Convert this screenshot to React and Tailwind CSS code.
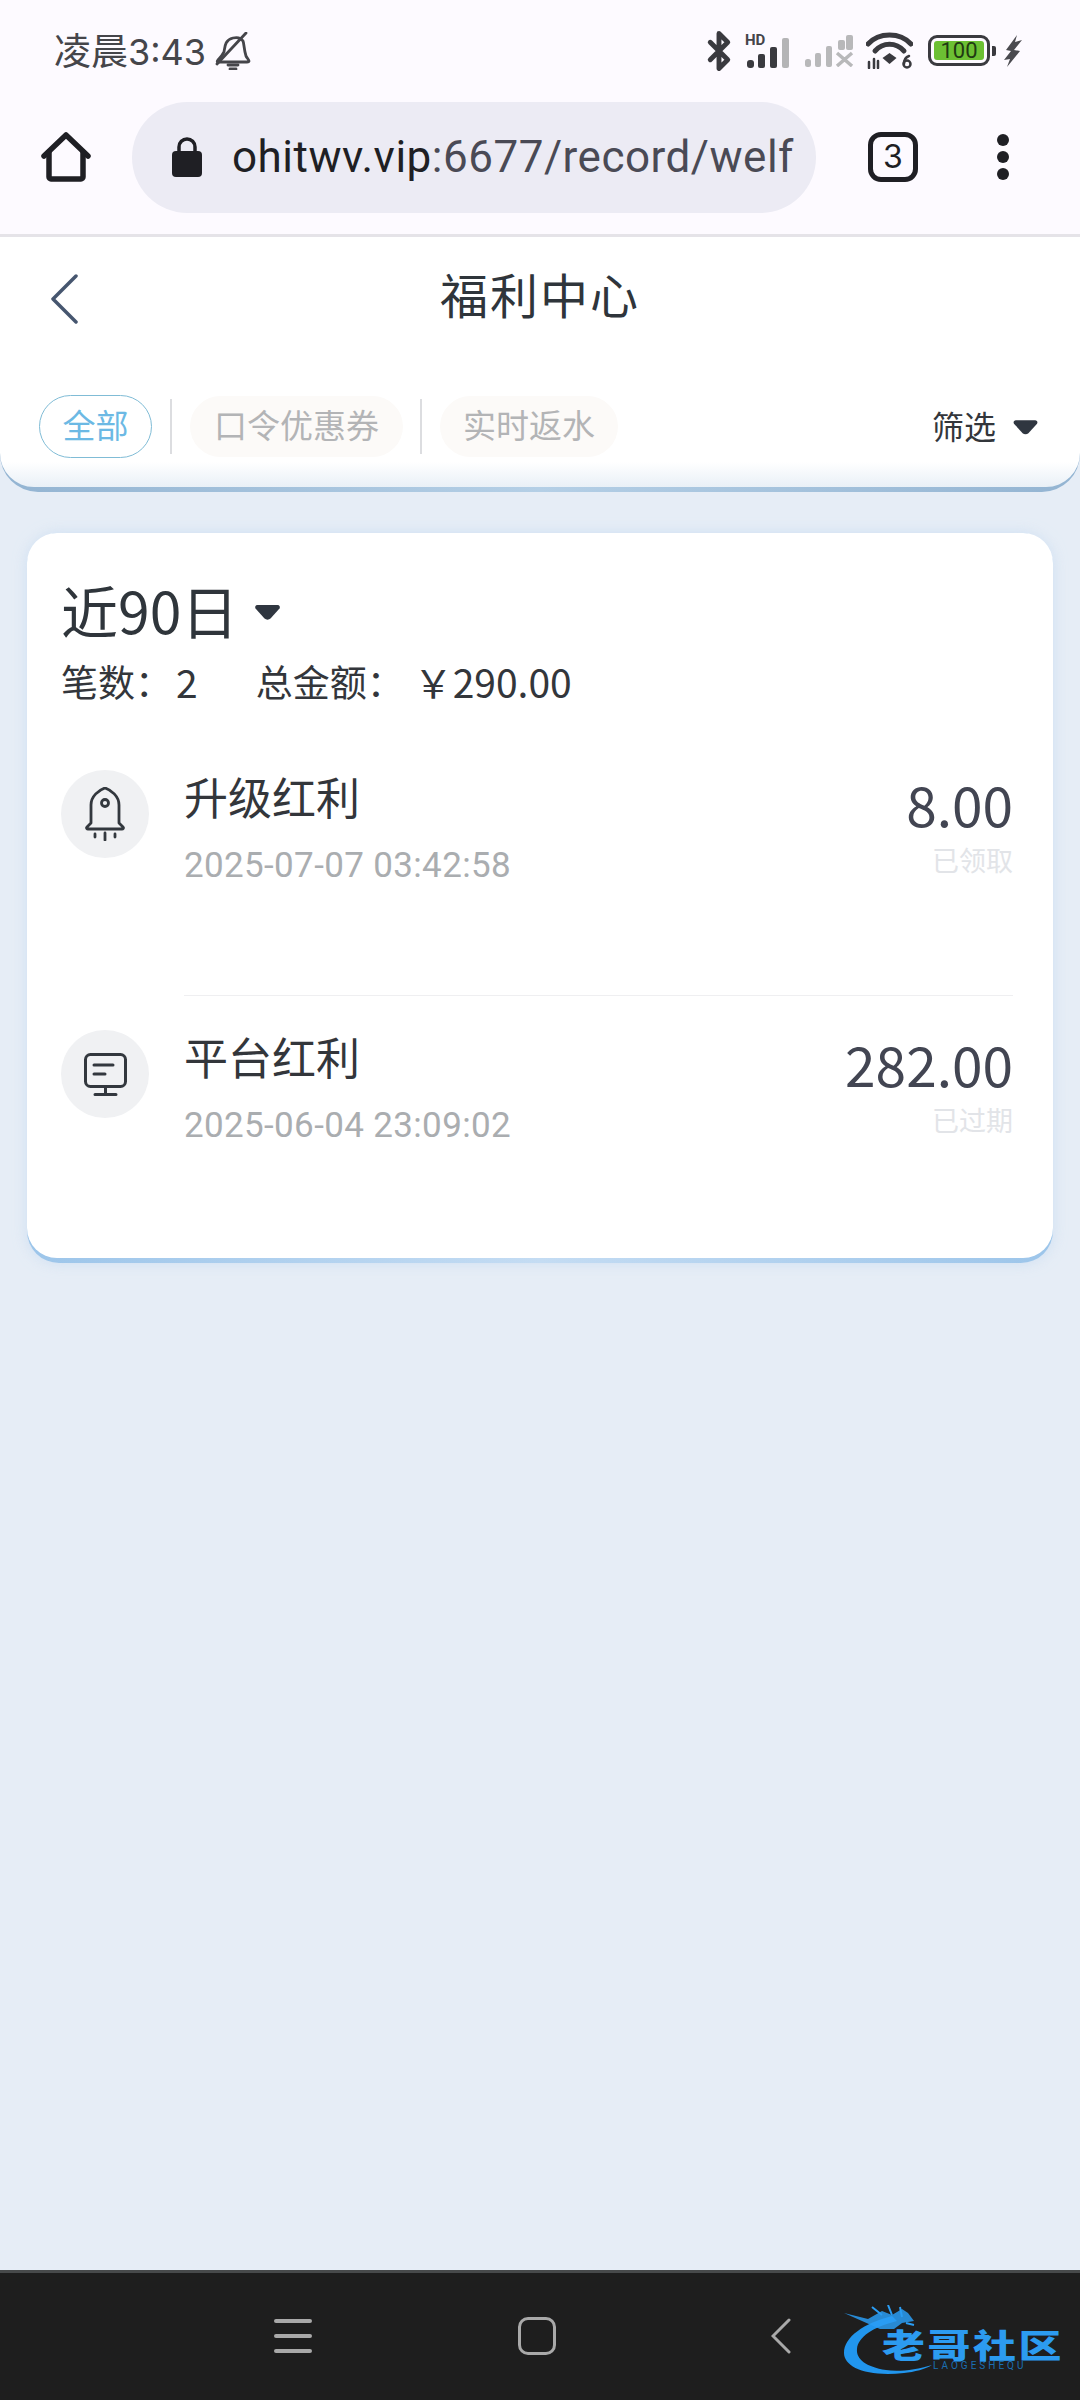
import React from 'react';
import { Bluetooth } from 'lucide-react';

const CJK = "font-['Noto_Sans_CJK_SC','Noto_Sans',sans-serif]";

const Caret = ({ className }) => (
  <svg viewBox="0 0 26 16" className={className} fill="#2f3640">
    <path d="M3 1h20c2 0 3 2 2 3.500l-9 10c-1.500 1.500-4.500 1.500-6 0l-9-10C0 3 1 1 3 1z" />
  </svg>
);

const MutedBell = () => (
  <svg width="36" height="38" viewBox="0 0 36 38" fill="none" stroke="#45454a" strokeWidth="2.800" strokeLinecap="round" strokeLinejoin="round" className="ml-[9px]">
    <path d="M9 20c1-6 1-12 9-14 4-1 8 0 10 3 1 2 1 9 3 15 1 2 3 4 3 5 0 1-1 1-2 1H3c-1 0-1-1 0-2 2-2 4-4 6-8z" />
    <path d="M2 32L31 1" />
    <path d="M13 33h10M15 37h6" />
  </svg>
);

const StatusBar = () => (
  <div className="flex h-[101px] items-center pl-[54px] pr-[58px] text-[#45454a]">
    <span className={`text-[37px] leading-none ${CJK}`}>凌晨<span className="font-['Inter'] text-[36px]">3:43</span></span>
    <MutedBell />
    <div className="ml-auto flex items-center">
      <Bluetooth size={42} strokeWidth={2.8} className="text-[#3a3a3f]" />
      <div className="relative ml-[5px] w-[49px]">
        <span className="absolute -top-[1px] left-0 text-[15px] leading-none font-bold font-['Roboto']">HD</span>
        <div className="pt-[4px]">
          <svg width="49" height="30" viewBox="0 0 49 30">
            <rect x="2" y="22" width="7" height="8" rx="3" fill="#3a3a3f" />
            <rect x="13" y="16" width="7" height="14" rx="2" fill="#3a3a3f" />
            <rect x="25" y="9" width="7" height="21" rx="2" fill="#3a3a3f" />
            <rect x="37" y="0" width="7" height="30" rx="2" fill="#b4b4b6" />
          </svg>
        </div>
      </div>
      <svg width="49" height="32" viewBox="0 0 49 32" className="ml-[11px]">
        <rect x="0" y="24" width="6" height="8" rx="2.500" fill="#b8b8ba" />
        <rect x="10" y="18" width="6" height="14" rx="2" fill="#b8b8ba" />
        <rect x="21" y="11" width="6" height="21" rx="2" fill="#b8b8ba" />
        <rect x="33" y="5" width="7" height="10" rx="2" fill="#b8b8ba" />
        <rect x="41" y="0" width="7" height="15" rx="2" fill="#b8b8ba" />
        <path d="M32 18l15 13M47 18L32 31" stroke="#b8b8ba" strokeWidth="3.500" />
      </svg>
      <svg width="47" height="37" viewBox="0 0 47 37" className="ml-[12px]" fill="none" stroke="#3a3a3f" strokeLinecap="round">
        <path d="M2 12C13 0 34 0 45 12" strokeWidth="5" />
        <path d="M9 19C17 10 30 10 38 19" strokeWidth="5" />
        <path d="M23.500 21l7 5-7 6-7-6z" fill="#3a3a3f" stroke="none" />
        <path d="M3 30v6M8 27v9M12 29v7" strokeWidth="2.500" />
        <circle cx="41" cy="32" r="3.500" strokeWidth="2.500" />
        <path d="M43 24c-3 1-5 4-5 8" strokeWidth="2.500" />
      </svg>
      <div className="ml-[15px] flex h-[31px] w-[62px] items-center justify-center rounded-[9px] border-[3px] border-[#3a3a3f] p-[3px]">
        <div className="flex h-full w-full items-center justify-center rounded-[3px] bg-[#6cc033] text-[22px] leading-none text-[#1f3a12] font-['Roboto']">100</div>
      </div>
      <div className="ml-[2px] h-[10px] w-[4px] rounded-r-[2px] bg-[#3a3a3f]" />
      <svg width="18" height="32" viewBox="0 0 18 32" fill="#4a4a4f" className="ml-[8px]">
        <path d="M13 0L2 15l5 1-7 9 6-1-3 8 13-16-6-1 8-10-7 2z" />
      </svg>
    </div>
  </div>
);

const Toolbar = () => (
  <div className="flex h-[112px] items-center pl-[41px]">
    <svg width="50" height="50" viewBox="0 0 50 50" fill="none" stroke="#1f1f24" strokeWidth="5.500" strokeLinejoin="round" strokeLinecap="round">
      <path d="M3 24L25 3l22 21" />
      <path d="M8 20v25c0 1 1 2 2 2h30c1 0 2-1 2-2V20" />
    </svg>
    <div className="ml-[41px] flex h-[111px] w-[684px] items-center overflow-hidden rounded-full bg-[#ecebf4] pl-[40px]">
      <svg width="30" height="40" viewBox="0 0 30 40" fill="#1f1f24">
        <path d="M7 16v-6a8 8 0 0116 0v6" fill="none" stroke="#1f1f24" strokeWidth="3.500" />
        <rect x="0" y="14" width="30" height="26" rx="4" />
      </svg>
      <span className="ml-[30px] whitespace-nowrap text-[44px] leading-none tracking-[0.5px] text-[#4a4a55] font-['Roboto']">
        <span className="text-[#1f1f24]">ohitwv.vip</span>:6677/record/welf
      </span>
    </div>
    <div className="ml-[52px] flex h-[50px] w-[50px] items-center justify-center rounded-[13px] border-[5px] border-[#1f1f24] text-[32px] leading-none text-[#1f1f24] font-['Inter']">3</div>
    <div className="ml-[79px] flex flex-col gap-[5px]">
      <div className="h-[12px] w-[12px] rounded-full bg-[#1f1f24]" />
      <div className="h-[12px] w-[12px] rounded-full bg-[#1f1f24]" />
      <div className="h-[12px] w-[12px] rounded-full bg-[#1f1f24]" />
    </div>
  </div>
);

const RocketIcon = () => (
  <svg width="40" height="54" viewBox="0 0 40 54" fill="none" stroke="#33383e" strokeWidth="2.800" strokeLinecap="round" strokeLinejoin="round">
    <path d="M6 36V18C6 9 14 3 20 1c6 2 14 8 14 17v18l4 4c1 1 0 2-1 2H3c-1 0-2-1-1-2z" />
    <circle cx="20" cy="16" r="3.500" />
    <path d="M20 46v7M10 47v3M30 47v3" />
  </svg>
);

const MonitorIcon = () => (
  <svg width="43" height="43" viewBox="0 0 43 43" fill="none" stroke="#33383e" strokeWidth="3" strokeLinecap="round" strokeLinejoin="round">
    <rect x="1.500" y="1.500" width="40" height="32" rx="5" />
    <path d="M10 12h19M10 21h11M21.500 34v7M11 41.500h21" />
  </svg>
);

const Record = ({ icon, title, date, amount, status, divider }) => (
  <div className="flex">
    <div className="flex h-[88px] w-[88px] shrink-0 items-center justify-center rounded-full bg-[#f0f1f3]">{icon}</div>
    <div className={`ml-[35px] flex flex-1 justify-between ${divider ? 'h-[226px] border-b border-[#efeff1]' : ''}`}>
      <div className="-mt-[3px]">
        <div className={`h-[58px] text-[44px] leading-[58px] text-[#33363b] ${CJK}`}>{title}</div>
        <div className="mt-[19px] h-[44px] text-[35px] leading-[44px] tracking-[0.35px] text-[#aaadb0] font-['Roboto']">{date}</div>
      </div>
      <div className="flex flex-col items-end">
        <div className={`mt-[3px] h-[60px] text-[55px] leading-[60px] text-[#424552] ${CJK}`}>{amount}</div>
        <div className={`mt-[10px] h-[34px] text-[27px] leading-[34px] text-[#e2e4e8] ${CJK}`}>{status}</div>
      </div>
    </div>
  </div>
);

const Logo = () => (
  <div className="absolute left-[842px] top-[32px] h-[72px] w-[226px]">
    <svg width="100" height="72" viewBox="0 0 100 72" className="absolute left-0 top-0">
      <path d="M50 11C22 18 2 32 2 48c0 14 22 24 60 20 10-1 22-4 28-8-16 5-34 7-46 5C24 62 14 54 15 44c1-12 16-22 40-28z" fill="#2196ee" />
      <path d="M2 8l24 6 14-8 10 4 10-6 6 4 6 8-12 2-8 6-14 0z" fill="#2a9df4" opacity="0.85" />
      <path d="M30 2l10 8M46 0l4 10M58 2l2 10M64 18l8 2" stroke="#2a9df4" strokeWidth="2" />
    </svg>
    <div className={`absolute left-[40px] top-[24px] origin-left scale-x-[1.3] whitespace-nowrap text-[33px] leading-[30px] font-black tracking-[2px] text-[#2c9bf0] ${CJK}`}>老哥社区</div>
    <div className="absolute left-[91px] top-[56px] whitespace-nowrap text-[10px] leading-[10px] tracking-[3px] text-[#1b6fb3] font-['Roboto']">LAOGESHEQU</div>
  </div>
);

export default function App() {
  return (
    <div className={`flex h-[2400px] w-[1080px] flex-col overflow-hidden bg-[#e6edf6] ${CJK}`}>
      {/* browser chrome */}
      <div className="h-[237px] border-b-[3px] border-[#e5e3e8] bg-[#fdfaff]">
        <StatusBar />
        <Toolbar />
      </div>

      {/* page header */}
      <div className="rounded-b-[38px] bg-gradient-to-r from-[#93b4d2] via-[#b4cfe6] to-[#93b4d2] pb-[5px]">
        <div className="rounded-b-[34px] bg-gradient-to-b from-white from-[90%] to-[#e9f0f7] pb-[29px]">
          <div className="grid h-[112px] grid-cols-[1fr_auto_1fr] items-center px-[50px]">
            <svg width="28" height="50" viewBox="0 0 28 50" fill="none" stroke="#46566f" strokeWidth="3.500" strokeLinecap="round" strokeLinejoin="round" className="mt-[12px]">
              <path d="M26 2L3 25l23 23" />
            </svg>
            <div className="text-[48px] leading-none tracking-[2px] text-[#2f353b]">福利中心</div>
            <div />
          </div>
          <div className="mt-[46px] flex h-[63px] items-center pl-[39px] pr-[42px]">
            <div className="flex h-[63px] w-[113px] items-center justify-center rounded-full border border-[#80bcd6] pb-[3px] text-[33px] text-[#6cb9e4]">全部</div>
            <div className="ml-[18px] h-[55px] w-[2px] bg-[#dcdde0]" />
            <div className="ml-[18px] flex h-[61px] w-[213px] items-center justify-center rounded-full bg-[#fcfaf8] pb-[3px] text-[33px] text-[#b3b4b6]">口令优惠券</div>
            <div className="ml-[17px] h-[55px] w-[2px] bg-[#dcdde0]" />
            <div className="ml-[18px] flex h-[61px] w-[178px] items-center justify-center rounded-full bg-[#fcfaf8] pb-[3px] text-[33px] text-[#b3b4b6]">实时返水</div>
            <div className="ml-auto pb-[3px] text-[32px] leading-none text-[#33363b]">筛选</div>
            <Caret className="ml-[17px] h-[16px] w-[25px]" />
          </div>
        </div>
      </div>

      {/* records card */}
      <div className="mx-[27px] mt-[41px] rounded-[32px] bg-gradient-to-r from-[#9cc5ea] via-[#c4dcf3] to-[#9cc5ea] pb-[5px] shadow-[0_0_14px_rgba(190,215,240,0.6)]">
        <div className="rounded-[30px] bg-white pb-[110px] pl-[34px] pr-[40px] pt-[47px]">
          <div className="flex h-[58px] items-center">
            <span className="text-[57px] leading-[58px] text-[#2f353b]">近90日</span>
            <Caret className="ml-[16px] mt-[6px] h-[16px] w-[27px]" />
          </div>
          <div className="mt-[23px] flex h-[40px] items-center text-[37px] leading-[40px] text-[#33363b]">
            <span>笔数：</span>
            <span className="ml-[4px] text-[39px]">2</span>
            <span className="ml-[58px]">总金额：</span>
            <span className="ml-[10px] text-[39px]">￥290.00</span>
          </div>
          <div className="mt-[69px]">
            <Record icon={<RocketIcon />} title="升级红利" date="2025-07-07 03:42:58" amount="8.00" status="已领取" divider />
          </div>
          <div className="mt-[34px]">
            <Record icon={<MonitorIcon />} title="平台红利" date="2025-06-04 23:09:02" amount="282.00" status="已过期" />
          </div>
        </div>
      </div>

      {/* android nav bar */}
      <div className="relative mt-auto flex h-[130px] items-center border-t-[3px] border-[#474a4b] bg-[#1e1e1e] pb-[2px] pl-[274px]">
        <div className="flex w-[38px] flex-col gap-[11px]">
          <div className="h-[4px] rounded-full bg-[#a9a9a9]" />
          <div className="h-[4px] rounded-full bg-[#a9a9a9]" />
          <div className="h-[4px] rounded-full bg-[#a9a9a9]" />
        </div>
        <div className="ml-[206px] h-[38px] w-[38px] rounded-[10px] border-[3px] border-[#a9a9a9]" />
        <svg width="20" height="36" viewBox="0 0 20 36" fill="none" stroke="#a9a9a9" strokeWidth="3" strokeLinecap="round" className="ml-[215px]">
          <path d="M18 2L2 18l16 16" />
        </svg>
        <Logo />
      </div>
    </div>
  );
}
